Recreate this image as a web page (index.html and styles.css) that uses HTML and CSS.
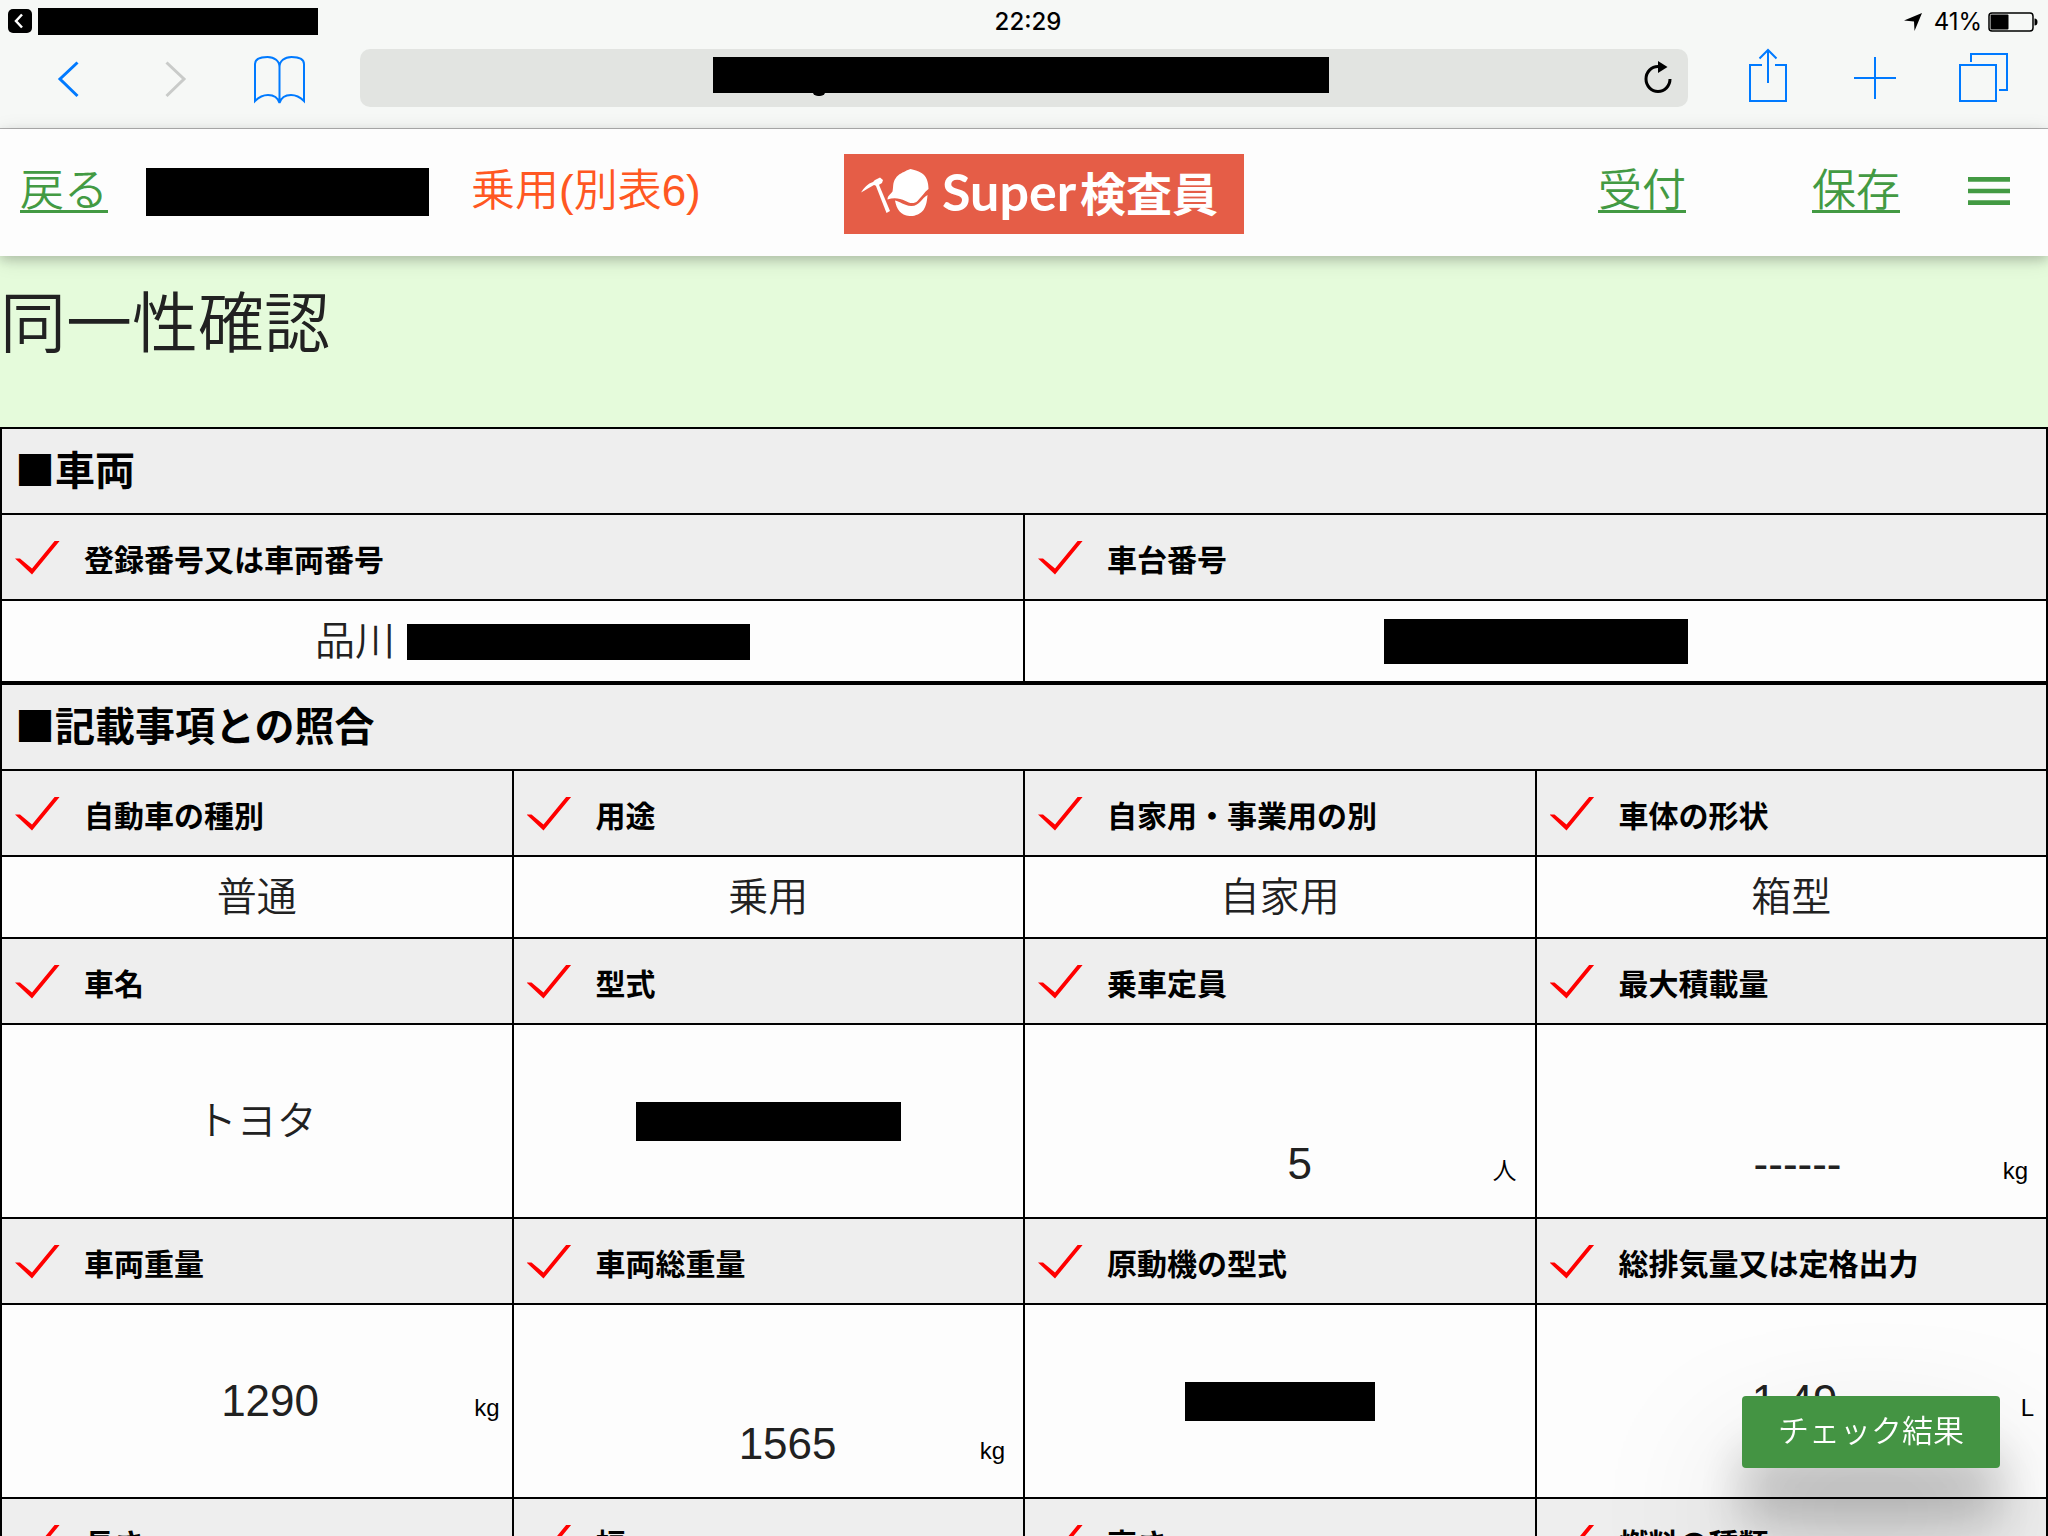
FILE: index.html
```html
<!DOCTYPE html>
<html lang="ja">
<head>
<meta charset="utf-8">
<meta name="viewport" content="width=device-width, initial-scale=1">
<title>Super検査員</title>
<link rel="stylesheet" href="styles.css">
</head>
<body>
<div class="browser">
  <div class="status">
    <div class="status-left">
      <svg class="back-app" viewBox="0 0 24 24" aria-hidden="true"><rect width="24" height="24" rx="5"/><path d="M14 5.500L8 12l6 6.500" fill="none" stroke="#fff" stroke-width="2.500"/></svg>
      <span class="redact redact-app"></span>
    </div>
    <time class="clock">22:29</time>
    <div class="status-right">
      <svg class="location" viewBox="0 0 18 18" aria-hidden="true"><path d="M18 0L10.500 18 10 8.500 0 7.500z"/></svg>
      <span>41%</span>
      <svg class="battery" viewBox="0 0 50 20" aria-hidden="true"><rect x="1" y="1" width="44" height="18" rx="3" fill="none" stroke="#000" stroke-width="1.500"/><rect x="2.500" y="2.500" width="18" height="15" rx="1"/><path d="M46.500 6.500q3 0 3 3.500t-3 3.500z"/></svg>
    </div>
  </div>
  <div class="toolbar">
    <button class="tool" aria-label="戻る"><svg viewBox="0 0 52 58"><path d="M35.500 13.500L18 30l17.500 17"/></svg></button>
    <button class="tool" aria-label="進む" disabled><svg viewBox="0 0 52 58"><path d="M18.500 13.500L36 30 18.500 47"/></svg></button>
    <button class="tool thin" aria-label="ブックマーク"><svg viewBox="0 0 52 58"><path d="M25.500 54V18c0-6-5-10-12-10S1 10 1 15v37c4-4 8-6 13-6 7 0 10 3 11.500 8M25.500 18c0-6 5-10 12-10S50 10 50 15v37c-4-4-8-6-13-6-7 0-10 3-11.500 8"/></svg></button>
    <div class="address">
      <span class="redact redact-url"></span>
      <button class="reload" aria-label="再読み込み"><svg viewBox="0 0 28 32"><path d="M14 5.500a12 12.500 0 1 0 12 12.500" fill="none" stroke="#000" stroke-width="3"/><path d="M14 0l9.500 6L14 12z"/></svg></button>
    </div>
    <button class="tool thin" aria-label="共有"><svg viewBox="0 0 52 58"><path d="M20 16H8v36h36V16H33M26 34V1M17.500 9.500L26 1l8.500 8.500"/></svg></button>
    <button class="tool thin" aria-label="新規タブ"><svg viewBox="0 0 52 58"><path d="M27 8v42M6 29h42"/></svg></button>
    <button class="tool thin" aria-label="タブ一覧"><svg viewBox="0 0 52 58"><path d="M6 16h36v36H6zM17 13V5h36v36h-8"/></svg></button>
  </div>
</div>

<header class="app-bar">
  <div class="bar-left">
    <a class="nav-link" href="#">戻る</a>
    <span class="redact redact-plate"></span>
    <span class="mode">乗用(別表6)</span>
  </div>
  <a class="logo" href="#" aria-label="Super検査員">
    <svg viewBox="0 0 98 80" aria-hidden="true">
      <path d="M30 27l3-1 13 31-3.500 2z"/>
      <path d="M17 38.500c3-5 7-9 12-10.500l2-2 5-2.500 3 2.500-1 3-5 3-3-1c-4 2-8 5-13 7.500z"/>
      <path d="M66.500 15c4 1 7 1.500 11 4 5 3 7 9 7 16-4 3-7 8-11 12-3 3-8 2.500-12 0-6-3-12-3.500-18-1.500 0-4 3-5 5-8 1-4 0-9 3-13 3-5 8-6 11-8z"/>
      <path d="M51 46.500c5 1 9 5 16 5.500 8 .500 10-7 16.500-11-.500 6-1 10-4 15-3 4-9 6.500-14 6-9-.500-13-7-14.500-15.500z"/>
    </svg>
    <span class="logo-text"><span class="logo-latin">Super</span><span class="logo-kanji">検査員</span></span>
  </a>
  <nav class="bar-right">
    <a class="nav-link nav-first" href="#">受付</a>
    <a class="nav-link" href="#">保存</a>
    <button class="menu" aria-label="メニュー"><svg viewBox="0 0 24 24"><path d="M3 18h18v-2H3v2zm0-5h18v-2H3v2zm0-7v2h18V6H3z"/></svg></button>
  </nav>
</header>

<main class="page">
  <h1>同一性確認</h1>

  <table>
    <tr><th class="section" colspan="2">■車両</th></tr>
    <tr>
      <th><label class="check"><input type="checkbox" checked><span>登録番号又は車両番号</span></label></th>
      <th><label class="check"><input type="checkbox" checked><span>車台番号</span></label></th>
    </tr>
    <tr>
      <td><div class="plate">品川<span class="redact redact-number"></span></div></td>
      <td><span class="redact redact-chassis"></span></td>
    </tr>
  </table>

  <table>
    <tr><th class="section" colspan="4">■記載事項との照合</th></tr>
    <tr>
      <th><label class="check"><input type="checkbox" checked><span>自動車の種別</span></label></th>
      <th><label class="check"><input type="checkbox" checked><span>用途</span></label></th>
      <th><label class="check"><input type="checkbox" checked><span>自家用・事業用の別</span></label></th>
      <th><label class="check"><input type="checkbox" checked><span>車体の形状</span></label></th>
    </tr>
    <tr>
      <td>普通</td>
      <td>乗用</td>
      <td>自家用</td>
      <td>箱型</td>
    </tr>
    <tr>
      <th><label class="check"><input type="checkbox" checked><span>車名</span></label></th>
      <th><label class="check"><input type="checkbox" checked><span>型式</span></label></th>
      <th><label class="check"><input type="checkbox" checked><span>乗車定員</span></label></th>
      <th><label class="check"><input type="checkbox" checked><span>最大積載量</span></label></th>
    </tr>
    <tr class="tall">
      <td>トヨタ</td>
      <td><span class="redact redact-model"></span></td>
      <td><label class="field low inset-l"><input type="text" value="5" aria-label="乗車定員"><span>人</span></label></td>
      <td><label class="field low inset-m"><input type="text" value="------" aria-label="最大積載量"><span>kg</span></label></td>
    </tr>
    <tr>
      <th><label class="check"><input type="checkbox" checked><span>車両重量</span></label></th>
      <th><label class="check"><input type="checkbox" checked><span>車両総重量</span></label></th>
      <th><label class="check"><input type="checkbox" checked><span>原動機の型式</span></label></th>
      <th><label class="check"><input type="checkbox" checked><span>総排気量又は定格出力</span></label></th>
    </tr>
    <tr class="tall">
      <td><label class="field inset-n"><input type="text" value="1290" aria-label="車両重量"><span>kg</span></label></td>
      <td><label class="field low inset-l"><input type="text" value="1565" aria-label="車両総重量"><span>kg</span></label></td>
      <td><span class="redact redact-engine"></span></td>
      <td><label class="field inset-s"><input type="text" value="1.49" aria-label="総排気量又は定格出力"><span>L</span></label></td>
    </tr>
    <tr>
      <th><label class="check"><input type="checkbox" checked><span>長さ</span></label></th>
      <th><label class="check"><input type="checkbox" checked><span>幅</span></label></th>
      <th><label class="check"><input type="checkbox" checked><span>高さ</span></label></th>
      <th><label class="check"><input type="checkbox" checked><span>燃料の種類</span></label></th>
    </tr>
  </table>
</main>

<button class="result">チェック結果</button>
</body>
</html>
```
FILE: styles.css
```css
* { box-sizing: border-box; }

body {
  margin: 0;
  height: 100vh;
  display: flex;
  flex-direction: column;
  overflow: hidden;
  background: #e5fbdb;
  color: #212121;
  font-family: "Liberation Sans", "Noto Sans CJK JP", sans-serif;
  font-weight: 350;
}

button {
  border: 0;
  padding: 0;
  background: none;
  font: inherit;
  color: inherit;
}

svg { display: block; }

.redact {
  display: block;
  flex: none;
  background: #000;
}

/* Browser chrome */
.browser {
  flex: none;
  background: #f6f8f6;
  border-bottom: 1px solid #b2b2b2;
  color: #000;
}

.status {
  display: grid;
  grid-template-columns: 1fr auto 1fr;
  align-items: center;
  height: 38px;
  padding: 2px 10px 0 8px;
  font: 400 24px/36px Inter, sans-serif;
}

.clock { font-weight: 500; margin-left: 10px; padding-top: 2px; }
.status-left, .status-right { display: flex; align-items: center; gap: 6px; }
.status-right { justify-content: flex-end; padding-top: 2px; }
.back-app { width: 24px; height: 24px; }
.redact-app { width: 280px; height: 27px; }
.location { width: 18px; height: 18px; margin-right: 6px; }
.battery { width: 50px; height: 20px; }

.toolbar {
  display: flex;
  gap: 54px;
  padding: 11px 42px 21px;
}

.tool { flex: none; width: 52px; height: 58px; color: #007aff; }
.tool:disabled { color: #c9cbc9; }
.tool svg {
  width: 52px;
  height: 58px;
  overflow: visible;
  fill: none;
  stroke: currentColor;
  stroke-width: 3;
}
.tool.thin svg { stroke-width: 2; }

.address {
  flex: 1;
  display: grid;
  grid-template-columns: 1fr auto 1fr;
  align-items: center;
  border-radius: 10px;
  background: #e2e4e1;
}
.redact-url { grid-column: 2; width: 616px; height: 36px; margin: 0 6px 6px 0; position: relative; }
.redact-url::after {
  content: "";
  position: absolute;
  left: 99px;
  bottom: -3px;
  width: 14px;
  height: 6px;
  border-radius: 0 0 7px 7px;
  background: #000;
}
.reload { grid-column: 3; justify-self: end; margin: 0 16px 2px 0; }
.reload svg { width: 28px; height: 32px; }

/* Application bar */
.app-bar {
  flex: none;
  z-index: 1;
  display: grid;
  grid-template-columns: 1fr auto 1fr;
  align-items: center;
  height: 127px;
  padding: 0 20px;
  background: #fdfdfd;
  box-shadow: 0 4px 10px rgba(0, 0, 0, .16), 0 4px 20px rgba(0, 0, 0, .12);
  font-size: 44px;
  line-height: 60px;
  white-space: nowrap;
}

.bar-left, .bar-right { display: flex; align-items: center; padding-bottom: 3px; }
.bar-left { gap: 38px; }
.bar-right { justify-content: flex-end; }
.nav-link { color: #439a43; text-decoration-thickness: 3px; text-underline-offset: 4px; }
.nav-first { margin-right: 126px; }
.mode { margin-left: 4px; color: #ff5722; }
.redact-plate { width: 283px; height: 48px; margin-top: 2px; }
.menu { margin: 0 11px 0 61px; color: #439a43; }
.menu svg { width: 56px; height: 56px; fill: currentColor; }

.logo {
  display: flex;
  align-items: center;
  width: 400px;
  height: 80px;
  margin: 2px 0 0 40px;
  background: #e55d47;
  color: #fff;
  text-decoration: none;
}
.logo svg { width: 98px; height: 80px; fill: #fff; }
.logo-text { display: flex; align-items: baseline; gap: 4px; padding-bottom: 5px; }
.logo-latin { font: 700 52px/60px Lato, sans-serif; }
.logo-kanji { font: 700 46px/60px "Noto Sans CJK JP", sans-serif; }

/* Page */
.page { flex: 1; min-height: 0; overflow-y: auto; scrollbar-width: none; }

h1 {
  margin: 0;
  height: 171px;
  padding-top: 23px;
  font-size: 66px;
  font-weight: 350;
  line-height: 90px;
}

table {
  width: 100%;
  table-layout: fixed;
  border-collapse: collapse;
}
th, td { height: 86px; padding: 0; border: 2px solid #000; }
th { background: #eee; color: #000; font-weight: 700; text-align: left; font-size: 30px; line-height: 40px; }
td { height: 82px; background: #fdfdfd; text-align: center; font-size: 40px; line-height: 60px; }
td .redact { margin: 0 auto; }
.tall td { height: 194px; }
.section { padding: 0 0 6px 13px; font-family: "Noto Sans CJK JP", sans-serif; font-size: 40px; line-height: 60px; }

.check { display: flex; align-items: center; gap: 24px; padding: 1px 0 0 13px; }
.check input {
  appearance: none;
  flex: none;
  width: 45px;
  height: 34px;
  margin: 0;
}
.check input:checked {
  background: #f00;
  clip-path: polygon(0 18px, 5px 18px, 17px 28px, 40px 0, 45px 0, 17px 34px);
}
.check span { padding-top: 6px; }

.plate { display: flex; align-items: center; justify-content: center; padding-left: 40px; }
.plate .redact { margin: 2px 0 0 12px; }
.redact-number { width: 343px; height: 36px; }
.redact-chassis { width: 304px; height: 45px; }
.redact-model { width: 265px; height: 39px; }
.redact-engine { width: 190px; height: 39px; }

.field { display: flex; align-items: baseline; gap: 8px; padding: 6px 12px 0 0; color: #000; font-size: 24px; }
.field input {
  flex: 1;
  min-width: 0;
  height: 60px;
  padding: 0;
  border: 0;
  background: none;
  color: #212121;
  font: 400 44px/60px "Liberation Sans", sans-serif;
  text-align: center;
}
.field.low { padding-top: 92px; padding-right: 18px; }
.field.inset-s { padding-left: 40px; }
.field.inset-m { padding-left: 64px; }
.field.inset-n { padding-left: 72px; }
.field.inset-l { padding-left: 90px; }

.result {
  position: fixed;
  z-index: 2;
  right: 48px;
  bottom: 68px;
  height: 72px;
  padding: 0 36px;
  border-radius: 4px;
  background: #449443;
  box-shadow: 0 54px 48px rgba(0, 0, 0, .2), 0 80px 154px rgba(0, 0, 0, .22);
  color: #fff;
  font-size: 31px;
  line-height: 72px;
}
```
